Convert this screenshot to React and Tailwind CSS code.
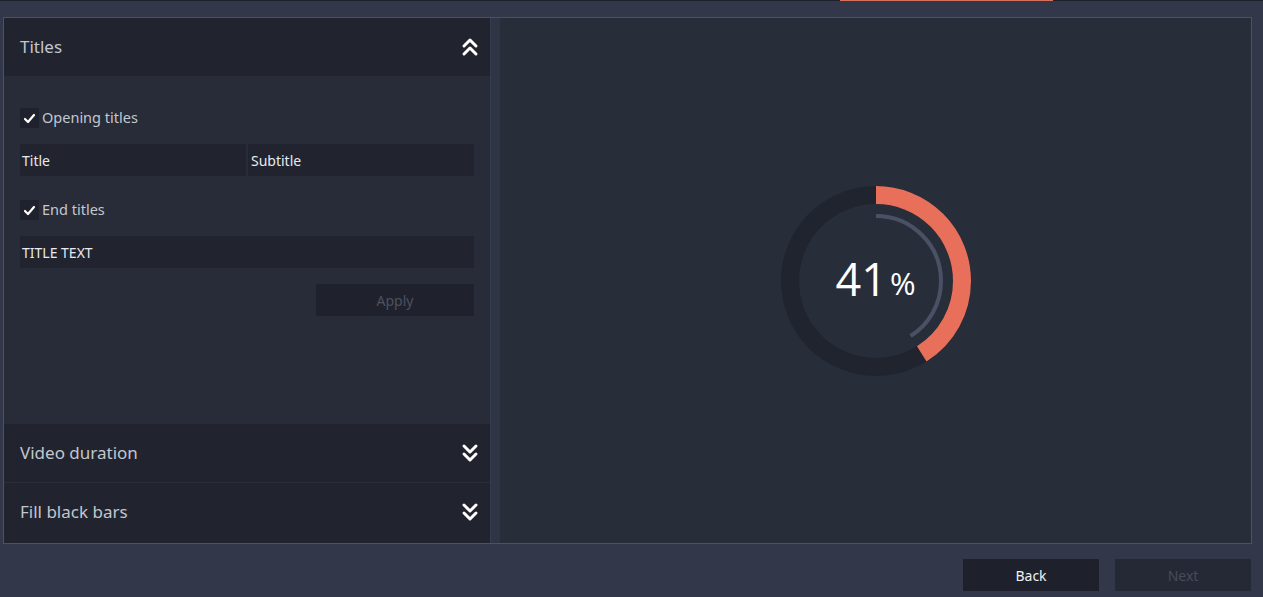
import React from 'react';

const font = { fontFamily: '"Noto Sans", "Open Sans", sans-serif' };

function Chevrons({ up }) {
  return (
    <svg width="18" height="20" viewBox="0 0 18 20" fill="none" stroke="#ffffff" strokeWidth="3" strokeLinecap="round" strokeLinejoin="round">
      {up ? (
        <>
          <polyline points="3,9 9,3 15,9" />
          <polyline points="3,17 9,11 15,17" />
        </>
      ) : (
        <>
          <polyline points="3,3 9,9 15,3" />
          <polyline points="3,11 9,17 15,11" />
        </>
      )}
    </svg>
  );
}

function Check({ label }) {
  return (
    <label className="flex items-center h-[20px] gap-[3px] text-[14.5px] text-[#c3c7d0]">
      <span className="w-[19px] h-[20px] bg-[#1f222c] flex items-center justify-center">
        <svg width="13" height="11" viewBox="0 0 13 11" fill="none" stroke="#ffffff" strokeWidth="2.2" strokeLinecap="round" strokeLinejoin="round">
          <polyline points="2,6 5,9 11,2" />
        </svg>
      </span>
      {label}
    </label>
  );
}

function Section({ title, open, className }) {
  return (
    <div className={`flex items-center justify-between pl-[16px] pr-[11px] bg-[#21242f] ${className}`}>
      <span className="text-[17px] text-[#c2c6ce]">{title}</span>
      <Chevrons up={open} />
    </div>
  );
}

function Progress({ value }) {
  const r1 = 86;
  const r2 = 65;
  const c1 = 2 * Math.PI * r1;
  const c2 = 2 * Math.PI * r2;
  return (
    <div className="relative w-[200px] h-[200px]">
      <svg width="200" height="200" viewBox="0 0 200 200">
        <circle cx="100" cy="100" r={r1} fill="none" stroke="#20242f" strokeWidth="18" />
        <circle cx="100" cy="100" r={r1} fill="none" stroke="#e8705a" strokeWidth="18"
          strokeDasharray={`${(c1 * value) / 100} ${c1}`} transform="rotate(-90 100 100)" />
        <circle cx="100" cy="100" r={r2} fill="none" stroke="#4a5164" strokeWidth="4"
          strokeDasharray={`${(c2 * value) / 100} ${c2}`} transform="rotate(-90 100 100)" />
      </svg>
      <div className="absolute inset-0 flex items-center justify-center text-white" style={{ fontFamily: '"Open Sans", sans-serif' }}>
        <span className="text-[45px] leading-none -mt-[4px]">{value}</span>
        <span className="text-[31px] leading-none mt-[6px] ml-[3px]">%</span>
      </div>
    </div>
  );
}

export default function App() {
  return (
    <div className="w-[1263px] h-[597px] bg-[#323849] flex flex-col overflow-hidden" style={font}>
      <div className="h-[17px] border-t border-[#1e222c] shrink-0">
        <div className="ml-[840px] w-[213px] h-[1px] bg-[#d9705e] -mt-[1px]" />
      </div>

      <div className="ml-[3px] w-[1249px] h-[527px] border border-[#4a5266] flex shrink-0">
        <div className="w-[486px] flex flex-col bg-[#21242f]">
          <Section title="Titles" open className="h-[58px] shrink-0" />
          <div className="h-[348px] shrink-0 bg-[#282c39] px-[16px] pt-[32px] flex flex-col">
            <Check label="Opening titles" />
            <div className="flex gap-[2px] mt-[16px]">
              <div className="w-[226px] h-[32px] bg-[#21242f] flex items-center pl-[2px] text-[14px] text-[#e8eaee]">Title</div>
              <div className="flex-1 h-[32px] bg-[#21242f] flex items-center pl-[3px] text-[14px] text-[#e8eaee]">Subtitle</div>
            </div>
            <div className="mt-[24px]">
              <Check label="End titles" />
            </div>
            <div className="mt-[16px] h-[32px] bg-[#21242f] flex items-center pl-[2px] text-[14px] text-[#e8eaee]">TITLE TEXT</div>
            <div className="mt-[16px] flex justify-end">
              <button className="w-[158px] h-[32px] bg-[#1f222c] text-[14px] text-[#4c5160]">Apply</button>
            </div>
          </div>
          <Section title="Video duration" className="h-[59px] shrink-0 border-b border-[#2a2e3a]" />
          <Section title="Fill black bars" className="h-[58px] shrink-0" />
        </div>
        <div className="w-[10px] bg-[#2f3545] border-l border-[#353c4d]" />
        <div className="flex-1 bg-[#282d3a] flex items-center justify-center">
          <Progress value={41} />
        </div>
      </div>

      <div className="flex justify-end gap-[16px] pr-[12px] mt-[15px]">
        <button className="w-[136px] h-[32px] bg-[#1e212b] text-[14px] text-[#f0f1f4]">Back</button>
        <button className="w-[136px] h-[32px] bg-[#252936] text-[14px] text-[#474c59]">Next</button>
      </div>
    </div>
  );
}
